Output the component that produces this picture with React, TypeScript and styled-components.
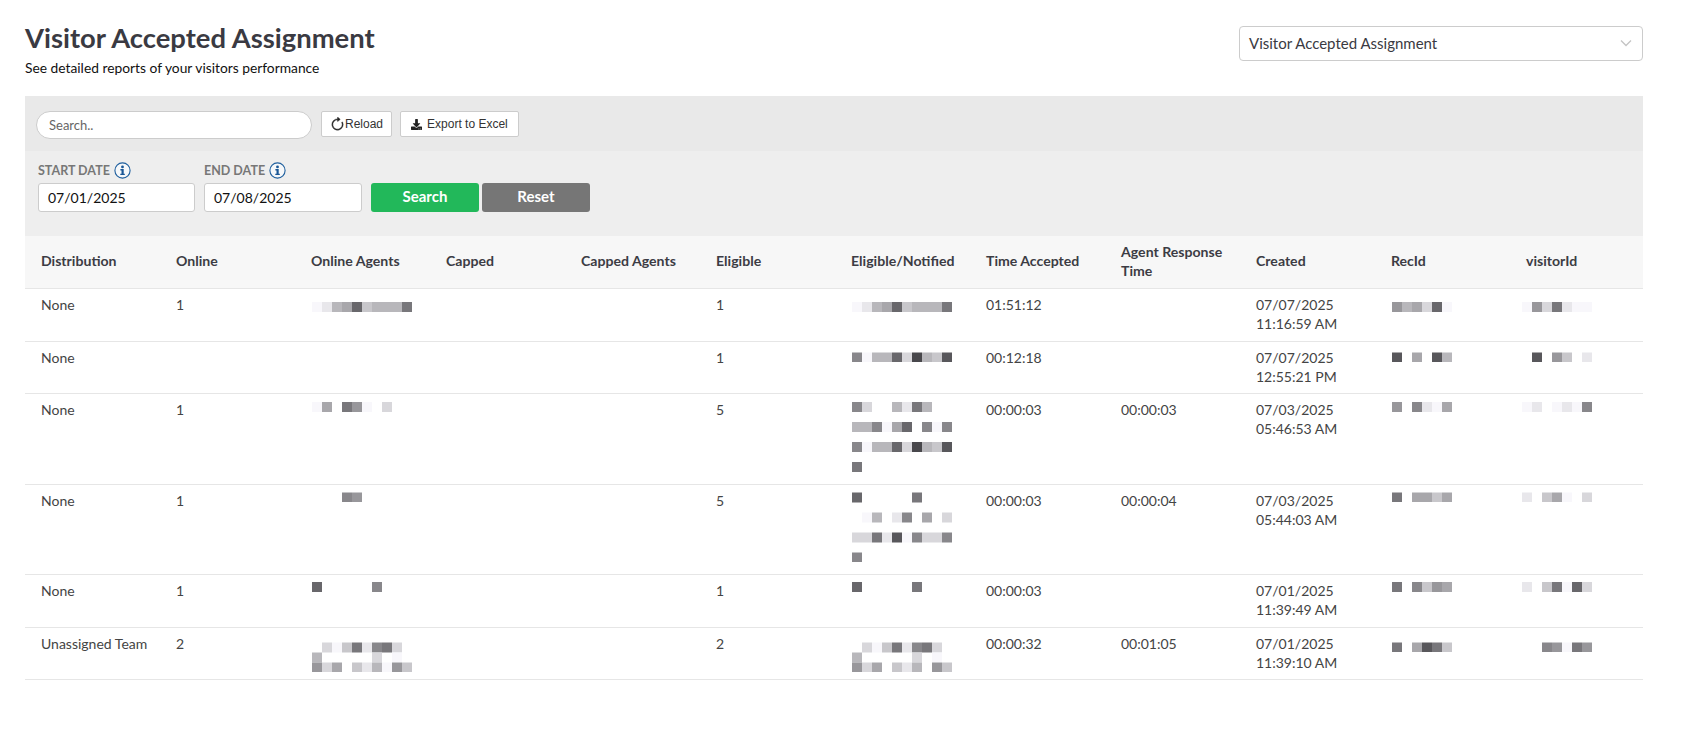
import React from "react";
import styled, { createGlobalStyle } from "styled-components";
import { FaDownload } from "react-icons/fa";
import { BsArrowClockwise } from "react-icons/bs";

const Global = createGlobalStyle`
  html, body { margin: 0; padding: 0; background: #fff; }
  body { font-family: Lato, "Noto Sans", sans-serif; color: #444; }
  * { box-sizing: border-box; }
`;

const Page = styled.div`
  width: 1681px;
  min-height: 739px;
  padding: 0 38px 0 25px;
`;

const Top = styled.header`
  height: 96px;
  display: flex;
  justify-content: space-between;
  align-items: flex-start;
`;

const TitleBlock = styled.div`
  padding-top: 21px;
`;

const Title = styled.h1`
  margin: 0;
  font-size: 27.4px;
  line-height: 34px;
  font-weight: 700;
  color: #3a3a42;
`;

const Subtitle = styled.p`
  margin: 4px 0 0;
  font-size: 13.8px;
  line-height: 18px;
  color: #111;
`;

const ReportSelect = styled.div`
  margin-top: 26px;
  width: 404px;
  height: 35px;
  border: 1px solid #ccc;
  border-radius: 4px;
  background: #fff;
  display: flex;
  align-items: center;
  justify-content: space-between;
  padding: 0 10px 2px 9px;
  font-size: 15px;
  color: #3a3a42;
`;

const Toolbar = styled.div`
  height: 55px;
  background: #e9e9e9;
  padding: 15px 0 0 11px;
  display: flex;
  align-items: flex-start;
  gap: 9px;
`;

const SearchBox = styled.div`
  width: 276px;
  height: 28px;
  border: 1px solid #ccc;
  border-radius: 14px;
  background: #fff;
  padding: 0 12px;
  display: flex;
  align-items: center;
  font-size: 13px;
  color: #666;
`;

const ToolButton = styled.button<{ $gap: number; $pad: number }>`
  height: 26px;
  padding: 0 ${(p) => p.$pad}px;
  border: 1px solid #ccc;
  border-radius: 2px;
  background: #fff;
  display: inline-flex;
  align-items: center;
  gap: ${(p) => p.$gap}px;
  font-family: "Liberation Sans", Arial, sans-serif;
  font-size: 12px;
  color: #333;
  svg { color: #222; flex: none; }
  & + & { margin-left: -1px; }
`;

const Filters = styled.div`
  height: 85px;
  background: #eee;
  padding: 8px 0 0 13px;
  display: flex;
  align-items: flex-start;
`;

const Field = styled.div<{ $width: number }>`
  width: ${(p) => p.$width}px;
  margin-right: 9px;
`;

const FieldLabel = styled.div`
  height: 24px;
  padding-bottom: 2px;
  display: flex;
  align-items: center;
  gap: 4px;
  font-size: 12.5px;
  font-weight: 700;
  color: #777;
  white-space: nowrap;
`;

const DateInput = styled.div`
  height: 29px;
  border: 1px solid #ccc;
  border-radius: 3px;
  background: #fff;
  display: flex;
  align-items: center;
  padding-left: 9px;
  font-size: 14px;
  color: #111;
`;

const ActionButton = styled.button<{ $bg: string }>`
  margin-top: 24px;
  margin-right: 3px;
  width: 108px;
  height: 29px;
  padding: 0 0 3px;
  border: 0;
  border-radius: 3px;
  background: ${(p) => p.$bg};
  color: #fff;
  font-family: inherit;
  font-size: 15px;
  font-weight: 700;
`;

const TableWrap = styled.div`
  overflow: hidden;
`;

const Table = styled.table`
  width: 1620px;
  table-layout: fixed;
  border-collapse: separate;
  border-spacing: 0;
`;

const HeadCell = styled.th`
  width: 135px;
  height: 53px;
  padding: 0 5px 3px 16px;
  background: #f7f7f7;
  border-bottom: 1px solid #e6e6e6;
  text-align: left;
  vertical-align: middle;
  font-size: 14.1px;
  line-height: 19px;
  font-weight: 700;
  color: #3c3c44;
`;

const Cell = styled.td<{ $tall: boolean; $redacted?: boolean }>`
  height: ${(p) => (p.$tall ? 90.5 : 52.5)}px;
  padding: 6px 5px 0 ${(p) => (p.$redacted ? 17 : 16)}px;
  border-bottom: 1px solid #e6e6e6;
  vertical-align: top;
  font-size: 14px;
  line-height: 19px;
  color: #444;
`;

const Mosaic = styled.svg<{ $shift: number }>`
  display: block;
  margin-left: ${(p) => p.$shift}px;
`;

function Redacted({ lines, top = 0, gap = 20, shift = 0 }: { lines: string[]; top?: number; gap?: number; shift?: number }) {
  const width = Math.max(...lines.map((l) => l.length)) * 10;
  const height = top + (lines.length - 1) * gap + 10;
  return (
    <Mosaic $shift={shift} width={width} height={height} viewBox={`0 0 ${width} ${height}`}>
      {lines.map((line, y) =>
        line.split("").map((c, x) => {
          if (c === ".") return null;
          const v = parseInt(c, 16) * 16 + 8;
          return <rect key={`${y}-${x}`} x={x * 10} y={top + y * gap} width={10} height={10} fill={`rgb(${v},${v - 1},${Math.min(v + 3, 255)})`} />;
        })
      )}
    </Mosaic>
  );
}

function InfoIcon() {
  return (
    <svg width="17" height="17" viewBox="0 0 17 17" fill="none">
      <circle cx="8.5" cy="8.5" r="7.6" fill="#f6f8fa" stroke="#1f5f9e" strokeWidth="1.1" />
      <circle cx="8.5" cy="4.9" r="1.4" fill="#1a5796" />
      <path d="M6.4 7h3.3v4.7h1.1v1.4H6.3v-1.4h1.2V8.4H6.4z" fill="#1a5796" />
    </svg>
  );
}

function Chevron() {
  return (
    <svg width="12" height="8" viewBox="0 0 12 8" fill="none">
      <path d="M1 1.5l5 5 5-5" stroke="#c4c4c4" strokeWidth="1.3" />
    </svg>
  );
}

const headers = ["Distribution", "Online", "Online Agents", "Capped", "Capped Agents", "Eligible", "Eligible/Notified", "Time Accepted", "Agent Response Time", "Created", "RecId", "visitorId"];

type Mask = { lines: string[]; gap?: number };
type Row = {
  tall: boolean; dist: string; online: string; agents?: Mask; eligible: string; notified: Mask;
  accepted: string; response: string; date: string; time: string; rec: string; visitor: string; maskTop: number;
};

const rows: Row[] = [
  { tall: false, dist: "None", online: "1", agents: { lines: ["feba6cbbb7"] }, eligible: "1", notified: { lines: ["feba6cbbb7"] }, accepted: "01:51:12", response: "", date: "07/07/2025", time: "11:16:59 AM", rec: "9bad6f", visitor: "f9d7eff", maskTop: 7 },
  { tall: false, dist: "None", online: "", eligible: "1", notified: { lines: ["8fbb6d4bc5"] }, accepted: "00:12:18", response: "", date: "07/07/2025", time: "12:55:21 PM", rec: "5.a.5b", visitor: ".5.9c.e", maskTop: 4.5 },
  { tall: true, dist: "None", online: "1", agents: { lines: ["fa.79f.d"] }, eligible: "5", notified: { lines: ["8d..be7b", "bb8fa6.8f8", "8fbb6d4bc5", "7"] }, accepted: "00:00:03", response: "00:00:03", date: "07/03/2025", time: "05:46:53 AM", rec: "9.8efa", visitor: "fe.fef8", maskTop: 2 },
  { tall: true, dist: "None", online: "1", agents: { lines: ["...89"] }, eligible: "5", notified: { lines: ["6.....7", ".fb.e8.a.d", "dd7e5f8dd8", "8"] }, accepted: "00:00:03", response: "00:00:04", date: "07/03/2025", time: "05:44:03 AM", rec: "7.aaca", visitor: "e.caf.d", maskTop: 1.5 },
  { tall: false, dist: "None", online: "1", agents: { lines: ["6.....8"] }, eligible: "1", notified: { lines: ["6.....7"] }, accepted: "00:00:03", response: "", date: "07/01/2025", time: "11:39:49 AM", rec: "7.8c9a", visitor: "e.c7f6d", maskTop: 1 },
  { tall: false, dist: "Unassigned Team", online: "2", agents: { lines: [".dfc7e87d", "b.....d.f", "9da.cebf9c"], gap: 10 }, eligible: "2", notified: { lines: [".dfc7e87d", "b.....d.f", "9da.ceb.9c"], gap: 10 }, accepted: "00:00:32", response: "00:01:05", date: "07/01/2025", time: "11:39:10 AM", rec: "7.a57c", visitor: "..89f79", maskTop: 8.5 },
];

export default function App() {
  return (
    <Page>
      <Global />
      <Top>
        <TitleBlock>
          <Title>Visitor Accepted Assignment</Title>
          <Subtitle>See detailed reports of your visitors performance</Subtitle>
        </TitleBlock>
        <ReportSelect>
          <span>Visitor Accepted Assignment</span>
          <Chevron />
        </ReportSelect>
      </Top>
      <Toolbar>
        <SearchBox>Search..</SearchBox>
        <ToolButton $gap={0} $pad={8}><BsArrowClockwise size={15} strokeWidth={0.5} />Reload</ToolButton>
        <ToolButton $gap={5} $pad={10}><FaDownload size={11} />Export to Excel</ToolButton>
      </Toolbar>
      <Filters>
        <Field $width={157}>
          <FieldLabel>START DATE <InfoIcon /></FieldLabel>
          <DateInput>07/01/2025</DateInput>
        </Field>
        <Field $width={158}>
          <FieldLabel>END DATE <InfoIcon /></FieldLabel>
          <DateInput>07/08/2025</DateInput>
        </Field>
        <ActionButton $bg="#22b85a">Search</ActionButton>
        <ActionButton $bg="#767676">Reset</ActionButton>
      </Filters>
      <TableWrap>
        <Table>
          <thead>
            <tr>{headers.map((h) => <HeadCell key={h}>{h}</HeadCell>)}</tr>
          </thead>
          <tbody>
            {rows.map((r, i) => {
              const c = (content: React.ReactNode) => <Cell $tall={r.tall}>{content}</Cell>;
              const m = (content: React.ReactNode) => <Cell $tall={r.tall} $redacted>{content}</Cell>;
              return (
                <tr key={i}>
                  {c(r.dist)}
                  {c(r.online)}
                  {m(r.agents ? <Redacted lines={r.agents.lines} top={r.maskTop} gap={r.agents.gap} /> : null)}
                  {c(null)}
                  {c(null)}
                  {c(r.eligible)}
                  {m(<Redacted lines={r.notified.lines} top={r.maskTop} gap={r.notified.gap} />)}
                  {c(r.accepted)}
                  {c(r.response)}
                  {c(<>{r.date}<br />{r.time}</>)}
                  {m(<Redacted lines={[r.rec]} top={r.maskTop} />)}
                  {m(<Redacted lines={[r.visitor]} top={r.maskTop} shift={-5} />)}
                </tr>
              );
            })}
          </tbody>
        </Table>
      </TableWrap>
    </Page>
  );
}
